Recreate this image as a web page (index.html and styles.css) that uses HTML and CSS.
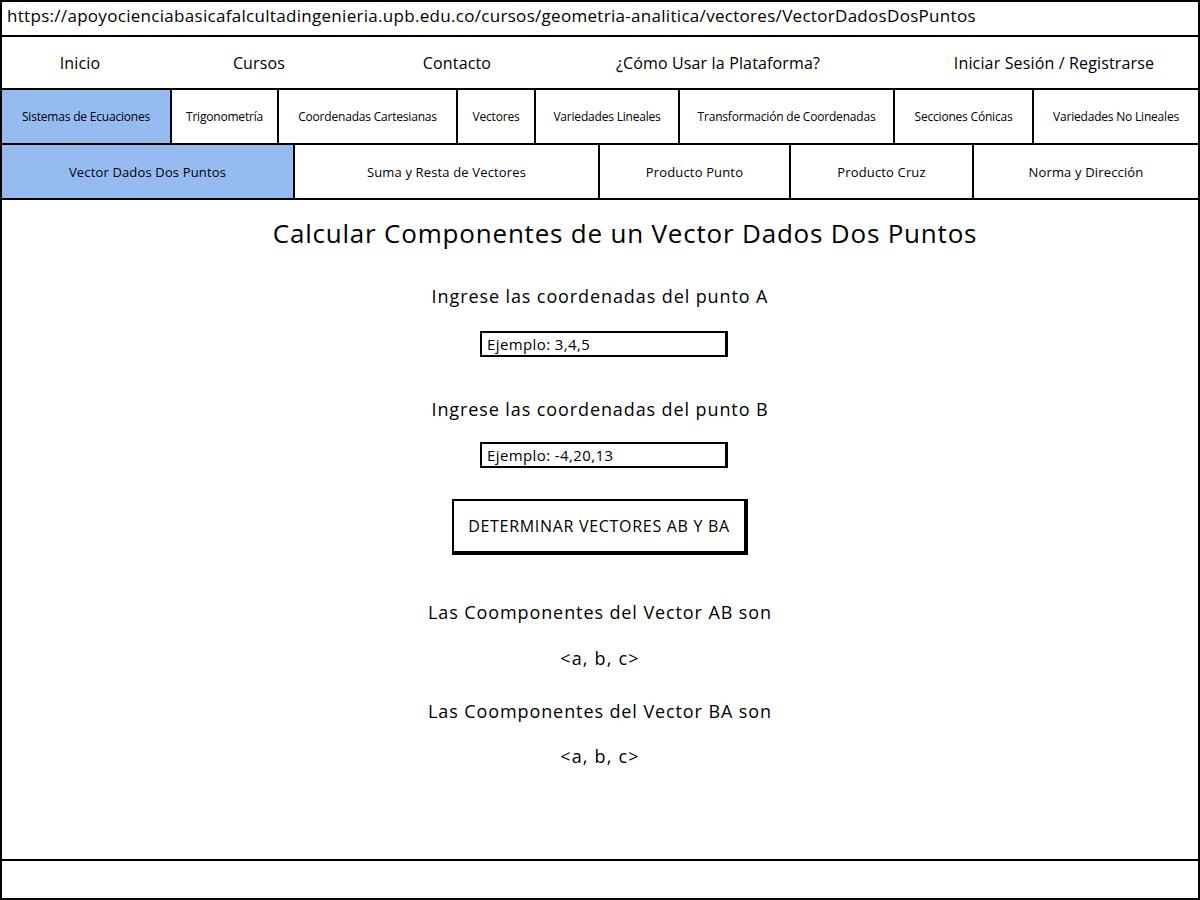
FILE: index.html
```html
<!DOCTYPE html>
<html lang="es">
<head>
<meta charset="utf-8">
<title>Vector Dados Dos Puntos</title>
<link rel="stylesheet" href="styles.css">
</head>
<body>
<div class="frame">
  <div class="url">https://apoyocienciabasicafalcultadingenieria.upb.edu.co/cursos/geometria-analitica/vectores/VectorDadosDosPuntos</div>
  <nav class="nav">
    <span>Inicio</span>
    <span>Cursos</span>
    <span>Contacto</span>
    <span>¿Cómo Usar la Plataforma?</span>
    <span class="spacer"></span>
    <span>Iniciar Sesión / Registrarse</span>
  </nav>
  <div class="tabs tabs-main">
    <div class="tab active">Sistemas de Ecuaciones</div>
    <div class="tab">Trigonometría</div>
    <div class="tab">Coordenadas Cartesianas</div>
    <div class="tab">Vectores</div>
    <div class="tab">Variedades Lineales</div>
    <div class="tab">Transformación de Coordenadas</div>
    <div class="tab">Secciones Cónicas</div>
    <div class="tab last">Variedades No Lineales</div>
  </div>
  <div class="tabs tabs-sub">
    <div class="tab active">Vector Dados Dos Puntos</div>
    <div class="tab">Suma y Resta de Vectores</div>
    <div class="tab">Producto Punto</div>
    <div class="tab">Producto Cruz</div>
    <div class="tab last">Norma y Dirección</div>
  </div>
  <main class="content">
    <h1 class="title">Calcular Componentes de un Vector Dados Dos Puntos</h1>
    <p class="label label-a">Ingrese las coordenadas del punto A</p>
    <input class="field field-a" type="text" value="Ejemplo: 3,4,5">
    <p class="label label-b">Ingrese las coordenadas del punto B</p>
    <input class="field field-b" type="text" value="Ejemplo: -4,20,13">
    <button class="btn" type="button">DETERMINAR VECTORES AB Y BA</button>
    <p class="label res-ab">Las Coomponentes del Vector AB son</p>
    <p class="label vec vec-1">&lt;a, b, c&gt;</p>
    <p class="label res-ba">Las Coomponentes del Vector BA son</p>
    <p class="label vec vec-2">&lt;a, b, c&gt;</p>
  </main>
  <footer class="footer"></footer>
</div>
</body>
</html>
```

FILE: styles.css
```css
* { box-sizing: border-box; }
html, body { margin: 0; padding: 0; background: #fff; }
body { font-family: "Open Sans", "Liberation Sans", sans-serif; color: #000; }

.frame {
  width: 1200px;
  height: 900px;
  border: 2px solid #000;
  display: flex;
  flex-direction: column;
}

.url {
  height: 35px;
  border-bottom: 2px solid #000;
  padding-left: 5px;
  font-size: 17px;
  letter-spacing: 0.3px;
  line-height: 27px;
  white-space: nowrap;
  overflow: hidden;
}

.nav {
  height: 53px;
  border-bottom: 2px solid #000;
  display: grid;
  grid-template-columns: 156px 202px 194px 328px 28px 1fr;
  align-items: center;
  font-size: 16px;
  letter-spacing: 0.15px;
}
.nav span { text-align: center; }

.tabs {
  height: 55px;
  border-bottom: 2px solid #000;
  display: grid;
  font-size: 12px;
  letter-spacing: -0.2px;
}
.tabs-main { grid-template-columns: 170px 107px 179px 78px 144px 215px 139px 1fr; }
.tabs-sub {
  grid-template-columns: 293px 305px 191px 183px 1fr;
  font-size: 13px;
  letter-spacing: 0.15px;
}

.tab {
  border-right: 2px solid #000;
  display: flex;
  align-items: center;
  justify-content: center;
  white-space: nowrap;
}
.tab.last { border-right: none; }
.tab.active { background: #95bbf1; }

.content {
  flex: 1;
  border-bottom: 2px solid #000;
  display: flex;
  flex-direction: column;
  align-items: center;
}

.title {
  margin: 17px 0 0 50px;
  font-size: 26px;
  letter-spacing: 0.8px;
  line-height: 32px;
  font-weight: 400;
}

.label {
  margin: 0;
  font-size: 18px;
  letter-spacing: 0.9px;
  line-height: 24px;
}
.label-a { margin-top: 35px; }
.label-b { margin-top: 40px; }
.res-ab { margin-top: 45px; }
.vec { letter-spacing: 1.2px; }
.vec-1 { margin-top: 22px; }
.res-ba { margin-top: 29px; }
.vec-2 { margin-top: 21px; }

.field {
  width: 248px;
  height: 26px;
  margin-left: 8px;
  border: 2px solid #000;
  border-right-width: 3px;
  padding: 0 5px;
  font-family: inherit;
  font-size: 15px;
  letter-spacing: 0.4px;
  color: #000;
  background: #fff;
  outline: none;
}
.field-a { margin-top: 23px; }
.field-b { margin-top: 21px; }

.btn {
  margin-top: 31px;
  width: 296px;
  height: 56px;
  border: 2px solid #000;
  border-right-width: 4px;
  border-bottom-width: 4px;
  background: #fff;
  font-family: inherit;
  font-size: 16px;
  letter-spacing: 0.7px;
  color: #000;
  padding: 0;
}

.footer { height: 37px; }
```
